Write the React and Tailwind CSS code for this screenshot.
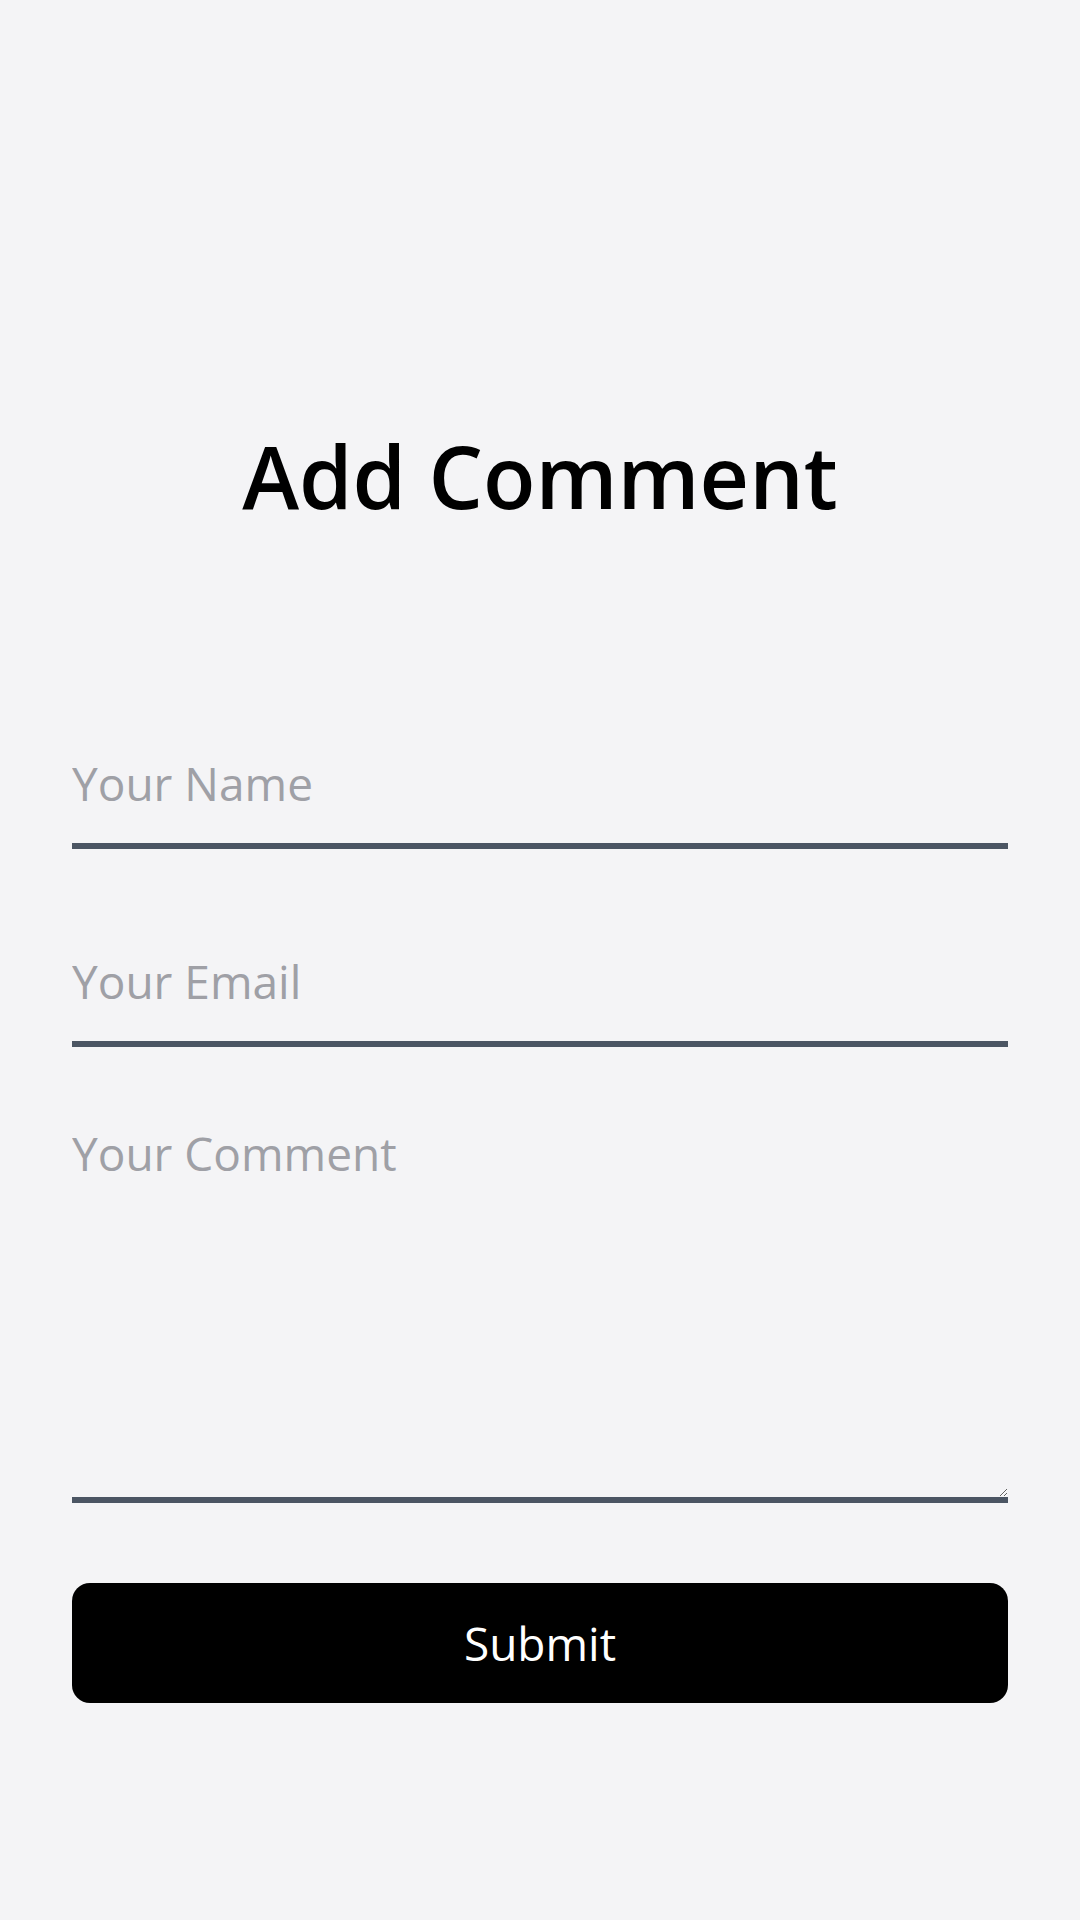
export default function App() {
  return (
    <div
      className="min-h-[1920px] w-[1080px] bg-[#f4f4f6] px-[72px] pt-[432px]"
      style={{ fontFamily: '"Open Sans", "Noto Sans", sans-serif' }}
    >
      <h1 className="h-[88px] text-center text-[86px] font-semibold leading-[88px] text-black">
        Add Comment
      </h1>
      <form className="mt-[203px] flex flex-col" onSubmit={(e) => e.preventDefault()}>
        <input
          type="text"
          placeholder="Your Name"
          className="h-[126px] w-full border-b-[6px] border-[#4b5563] bg-transparent p-0 text-[46px] text-black outline-none placeholder:text-[#9fa0a6]"
        />
        <input
          type="email"
          placeholder="Your Email"
          className="mt-[72px] h-[126px] w-full border-b-[6px] border-[#4b5563] bg-transparent p-0 text-[46px] text-black outline-none placeholder:text-[#9fa0a6]"
        />
        <textarea
          placeholder="Your Comment"
          className="mt-[46px] h-[410px] w-full border-b-[6px] border-[#4b5563] bg-transparent px-0 pt-[24px] text-[46px] leading-[72px] text-black outline-none placeholder:text-[#9fa0a6]"
        />
        <button
          type="submit"
          className="mt-[80px] h-[120px] w-full rounded-[18px] bg-black text-[46px] text-white"
        >
          Submit
        </button>
      </form>
    </div>
  );
}
